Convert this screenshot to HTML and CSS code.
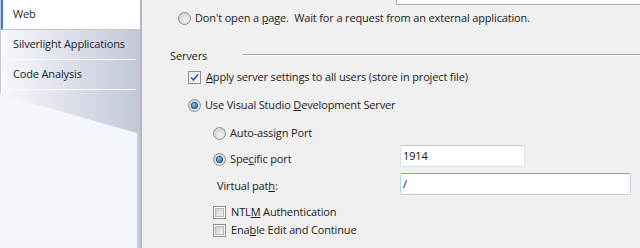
FILE: index.html
```html
<!DOCTYPE html>
<html lang="en">
<head>
    <meta charset="UTF-8">
    <title>Web</title>
    <link rel="stylesheet" href="styles.css">
</head>
<body>

    <div class="window">

        <aside class="sidebar">
            <ul class="tabs">
                <li class="tab active">Web</li>
                <li class="tab">Silverlight Applications</li>
                <li class="tab">Code Analysis</li>
            </ul>
        </aside>

        <main class="page">

            <div class="url-field"></div>

            <label class="option row-start">
                <span class="radio"></span>
                <span>Don't open a <u>p</u>age.&nbsp; Wait for a request from an external application.</span>
            </label>

            <div class="group-header">
                <span>Servers</span>
                <span class="rule"></span>
            </div>

            <label class="option row-apply">
                <span class="check checked">
                    <svg width="9" height="9" viewBox="0 0 9 9"><path d="M1 4.5 L3.5 7 L8 1.5" fill="none" stroke="#3b5aa0" stroke-width="1.6"/></svg>
                </span>
                <span><u>A</u>pply server settings to all users (store in project file)</span>
            </label>

            <label class="option row-vs">
                <span class="radio selected"></span>
                <span>Use Visual Studio <u>D</u>evelopment Server</span>
            </label>

            <div class="server-grid">
                <label class="option row-auto">
                    <span class="radio"></span>
                    <span>Auto-assi<u>g</u>n Port</span>
                </label>

                <label class="option row-port">
                    <span class="radio selected"></span>
                    <span>Spe<u>c</u>ific port</span>
                </label>
                <div class="textbox port-field">1914</div>

                <span class="field-label">Virtual pat<u>h</u>:</span>
                <div class="textbox path-field focused">/</div>

                <label class="option row-ntlm">
                    <span class="check"></span>
                    <span>NTL<u>M</u> Authentication</span>
                </label>

                <label class="option row-edit">
                    <span class="check"></span>
                    <span>Ena<u>b</u>le Edit and Continue</span>
                </label>
            </div>

        </main>

    </div>

</body>
</html>
```

FILE: styles.css
```css
body {
    margin: 0;
    background: #f0f0f0;
    font: 11px "Open Sans", "Noto Sans", sans-serif;
    letter-spacing: -0.15px;
    color: #1a1a1a;
}
.window {
    display: flex;
    height: 248px;
    overflow: hidden;
}

/* left tab strip */
.sidebar {
    width: 140px;
    flex-shrink: 0;
    border-right: 2px solid #b1b5c4;
    background: linear-gradient(to right, #f3f6fb 137px, #c5cadb 137px);
}
.tabs {
    margin: 0;
    padding: 0;
    list-style: none;
    height: 134px;
    border-left: 1px solid #c9ccd7;
    background: linear-gradient(to right, #f7f8fc, #dfe2eb 45%, #c2c7d9);
    clip-path: polygon(0 0, 100% 0, 100% 100%, 0 94px);
}
.tab {
    height: 29px;
    line-height: 28px;
    margin: 0 4px 0 5px;
    padding-left: 7px;
    border-bottom: 1px solid #f8f9fc;
    color: #1b1f2b;
    white-space: nowrap;
}
.tab.active {
    margin: 0;
    padding-left: 10px;
    border-left: 2px solid #3a7bd8;
    border-bottom: 1px solid #c3c6d2;
    background: #fff;
}

/* right page */
.page {
    flex: 1;
    padding-left: 28px;
    white-space: nowrap;
}
.url-field {
    height: 4px;
    margin-left: 226px;
    border: 1px solid #abadb3;
    border-top: none;
    border-right: none;
    background: #fbfbfb;
}
.option {
    display: flex;
    align-items: center;
    height: 16px;
    line-height: 16px;
}
.row-start {
    margin: 5px 0 0 8px;
}
.row-start .radio {
    margin-right: 4px;
}
.group-header {
    display: flex;
    align-items: center;
    height: 16px;
    margin-top: 21px;
}
.group-header .rule {
    flex: 1;
    margin-left: 36px;
    border-top: 1px solid #a0a0a0;
    border-bottom: 1px solid #fff;
}
.row-apply {
    margin: 6px 0 0 18px;
}
.row-vs {
    margin: 12px 0 0 18px;
}

.radio {
    width: 11px;
    height: 11px;
    border: 1px solid #8c8f94;
    border-radius: 50%;
    margin-right: 4px;
    flex-shrink: 0;
    background: radial-gradient(circle at 60% 65%, #f4f4f4, #d4d4d4 70%, #c8c8c8);
    display: flex;
    align-items: center;
    justify-content: center;
}
.radio.selected::before {
    content: "";
    width: 5px;
    height: 5px;
    border-radius: 50%;
    background: radial-gradient(circle at 40% 35%, #8fd6f5, #2a7fbf 60%, #134f86);
    box-shadow: 0 0 0 1px #1d4f7c;
}
.check {
    width: 11px;
    height: 11px;
    border: 1px solid #8e8f8f;
    margin-right: 5px;
    flex-shrink: 0;
    background: #fff;
    display: flex;
    align-items: center;
    justify-content: center;
}
.check::before {
    content: "";
    width: 7px;
    height: 7px;
    border: 1px solid #b6b6b6;
    background: linear-gradient(135deg, #cfcfcf, #f4f4f4);
}
.check.checked::before {
    display: none;
}
.check.checked {
    background: linear-gradient(135deg, #e3e7ee, #fafbfd);
}

/* server options */
.server-grid {
    display: grid;
    grid-template-columns: 187px 231px;
    margin-left: 43px;
}
.row-auto {
    grid-column: 1 / 3;
    margin-top: 12px;
}
.row-port {
    margin-top: 10px;
    align-self: start;
}
.port-field {
    margin-top: 4px;
    width: 121px;
}
.field-label {
    margin: 11px 0 0 4px;
    line-height: 16px;
}
.path-field {
    margin-top: 6px;
}
.row-ntlm {
    grid-column: 1 / 3;
    margin-top: 9px;
}
.row-edit {
    grid-column: 1 / 3;
    margin-top: 2px;
}
.textbox {
    height: 20px;
    line-height: 20px;
    padding-left: 2px;
    border: 1px solid #dcdde2;
    border-top-color: #c4c6cc;
    border-radius: 2px;
    background: #fff;
    color: #111;
}
.textbox.focused {
    border-color: #b7d4ec;
    border-top-color: #6fa1d1;
}
```
